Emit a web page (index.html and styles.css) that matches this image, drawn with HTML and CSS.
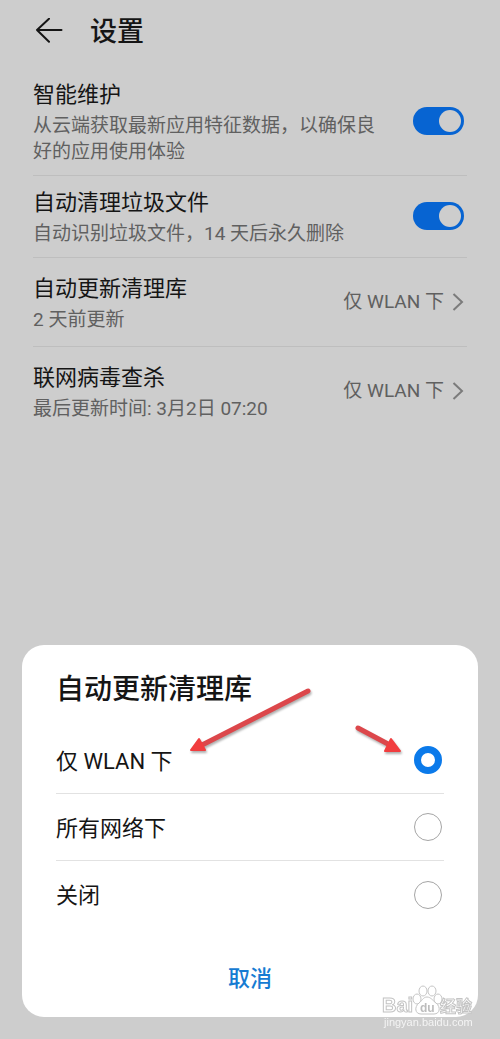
FILE: index.html
```html
<!DOCTYPE html>
<html lang="zh-CN">
<head>
<meta charset="utf-8">
<meta name="viewport" content="width=device-width, initial-scale=1">
<title>设置</title>
<link rel="stylesheet" href="styles.css">
</head>
<body>
<main class="page">
  <header class="topbar">
    <button class="back" type="button" aria-label="返回">
      <svg width="28" height="28" viewBox="0 0 28 28"><path d="M26.500 12H2M14 0.800L2 12l12 11.800"/></svg>
    </button>
    <h1 class="topbar-title">设置</h1>
  </header>
  <section class="settings">
    <div class="row">
      <label class="row-text" for="smart"><span class="row-title">智能维护</span><span class="row-sub">从云端获取最新应用特征数据，以确保良好的应用使用体验</span></label>
      <input class="toggle" id="smart" type="checkbox" role="switch" checked>
    </div>
    <div class="row">
      <label class="row-text" for="auto"><span class="row-title">自动清理垃圾文件</span><span class="row-sub">自动识别垃圾文件，14 天后永久删除</span></label>
      <input class="toggle" id="auto" type="checkbox" role="switch" checked>
    </div>
    <button class="row row-link" type="button">
      <span class="row-text"><span class="row-title">自动更新清理库</span><span class="row-sub">2 天前更新</span></span>
      <span class="value">仅 WLAN 下<svg class="chevron" width="12" height="20" viewBox="0 0 12 20"><path d="M1.500 2l8.500 8-8.500 8"/></svg></span>
    </button>
    <button class="row row-link" type="button">
      <span class="row-text"><span class="row-title">联网病毒查杀</span><span class="row-sub">最后更新时间: 3月2日 07:20</span></span>
      <span class="value">仅 WLAN 下<svg class="chevron" width="12" height="20" viewBox="0 0 12 20"><path d="M1.500 2l8.500 8-8.500 8"/></svg></span>
    </button>
  </section>
</main>

<section class="sheet" role="dialog" aria-labelledby="sheet-title">
  <h2 class="sheet-title" id="sheet-title">自动更新清理库</h2>
  <div class="options">
    <label class="option"><span class="option-text">仅 WLAN 下</span><input class="radio" type="radio" name="net" checked></label>
    <label class="option"><span class="option-text">所有网络下</span><input class="radio" type="radio" name="net"></label>
    <label class="option"><span class="option-text">关闭</span><input class="radio" type="radio" name="net"></label>
  </div>
  <button class="cancel" type="button">取消</button>
  <svg class="arrow arrow-label" width="126" height="70" viewBox="0 0 126 70" aria-hidden="true">
    <path class="arrow-line" d="M120 5L14 59"/><path class="arrow-head" d="M3 64l8-11 6 11z"/>
  </svg>
  <svg class="arrow arrow-radio" width="50" height="32" viewBox="0 0 50 32" aria-hidden="true">
    <path class="arrow-line" d="M6 4l30 16"/><path class="arrow-head" d="M48 27l-9-12-6 12z"/>
  </svg>
</section>

<div class="watermark">
  <svg width="92" height="32" viewBox="0 0 92 32" aria-hidden="true">
    <text class="mark mark-name" x="0" y="28">Bai</text>
    <g class="mark">
      <ellipse cx="35" cy="15" rx="4" ry="5"/><ellipse cx="41" cy="7" rx="4" ry="5"/><ellipse cx="50" cy="7" rx="4" ry="5"/><ellipse cx="56" cy="15" rx="4" ry="5"/>
      <path d="M45 13c-4 0-5 4-8 6-5 4-4 11 2 11h13c6 0 7-7 2-11-3-2-5-6-9-6z"/>
    </g>
    <text class="mark-du" x="38" y="28">du</text>
    <text class="mark mark-cn" x="58" y="28">经验</text>
  </svg>
  <span class="watermark-url">jingyan.baidu.com</span>
</div>
</body>
</html>
```
FILE: styles.css
```css
* { box-sizing: border-box; }

body {
  margin: 0;
  min-height: 100vh;
  background: #cdcdcd;
  color: #151515;
  font-family: Roboto, "Noto Sans CJK SC", sans-serif;
}

button {
  border: 0;
  padding: 0;
  background: none;
  color: inherit;
  font: inherit;
  text-align: left;
}

.page { padding: 0 33px; }

.topbar {
  display: flex;
  align-items: center;
  gap: 27px;
  height: 63px;
  padding-left: 2px;
}
.back { display: flex; }
.back svg { fill: none; stroke: #151515; stroke-width: 2; stroke-linecap: round; stroke-linejoin: round; }
.topbar-title { margin: 0; font-size: 27px; font-weight: 500; line-height: 38px; }

.settings { padding-top: 5px; }

.row {
  display: flex;
  align-items: center;
  justify-content: space-between;
  gap: 24px;
  width: 100%;
  padding: 9px 3px 10px 0;
  border-bottom: 1px solid #bebebe;
}
.row-link { padding: 13px 3px 13px 0; }
.row:last-child { border-bottom: 0; }
.row-text { display: flex; flex-direction: column; flex: 1; }
.row-title { font-size: 22px; line-height: 36px; }
.row-sub { font-size: 19px; line-height: 26px; color: #606060; }

.toggle {
  appearance: none;
  flex: none;
  display: flex;
  justify-content: flex-end;
  width: 51px;
  height: 28px;
  margin: 0;
  padding: 3px;
  border-radius: 14px;
  background: #0764d2;
}
.toggle::before {
  content: "";
  width: 22px;
  height: 22px;
  border-radius: 50%;
  background: #cdcdcd;
}

.value {
  display: flex;
  align-items: center;
  gap: 8px;
  font-size: 19px;
  line-height: 26px;
  color: #606060;
}
.chevron { fill: none; stroke: #7b7b7b; stroke-width: 2; }

.sheet {
  position: fixed;
  left: 22px;
  right: 22px;
  bottom: 22px;
  padding: 26px 34px 16px;
  border-radius: 22px;
  background: #ffffff;
}
.sheet-title { margin: 0 0 18px; font-size: 28px; font-weight: 500; line-height: 38px; }

.option {
  display: flex;
  align-items: center;
  justify-content: space-between;
  height: 67px;
  padding-right: 2px;
  border-bottom: 1px solid #e2e2e2;
  font-size: 22px;
}
.option:last-child { border-bottom: 0; }
.option-text { padding-bottom: 3px; }

.radio {
  appearance: none;
  width: 28px;
  height: 28px;
  margin: 0;
  border: 1px solid #a5a5a5;
  border-radius: 50%;
  background: #ffffff;
}
.radio:checked { border: 7px solid #0b7aea; }

.cancel {
  display: block;
  width: 100%;
  margin-top: 29px;
  font-size: 22px;
  font-weight: 500;
  line-height: 44px;
  text-align: center;
  color: #167bd2;
}

.arrow { position: absolute; filter: drop-shadow(1px 2px 1px #00000050); }
.arrow-label { top: 41px; left: 166px; }
.arrow-radio { top: 79px; right: 76px; }
.arrow-line { fill: none; stroke: #dc474b; stroke-width: 5; stroke-linecap: round; }
.arrow-head { fill: #f13d3f; stroke: #f13d3f; stroke-width: 2; stroke-linejoin: round; }

.watermark {
  position: fixed;
  right: 26px;
  bottom: 11px;
  display: flex;
  flex-direction: column;
  width: 92px;
}
.mark { fill: #ffffff; stroke: #c4c4c4; stroke-width: 1; }
.mark-name { font-family: "Liberation Sans", sans-serif; font-size: 20px; font-weight: 700; }
.mark-du { fill: #bdbdbd; font-family: "Liberation Sans", sans-serif; font-size: 12px; font-weight: 700; }
.mark-cn { font-family: "Noto Sans CJK SC", sans-serif; font-size: 16px; font-weight: 700; }
.watermark-url { padding-left: 2px; font-family: "Liberation Sans", sans-serif; font-size: 11px; line-height: 12px; color: #f4f4f4; }
```
